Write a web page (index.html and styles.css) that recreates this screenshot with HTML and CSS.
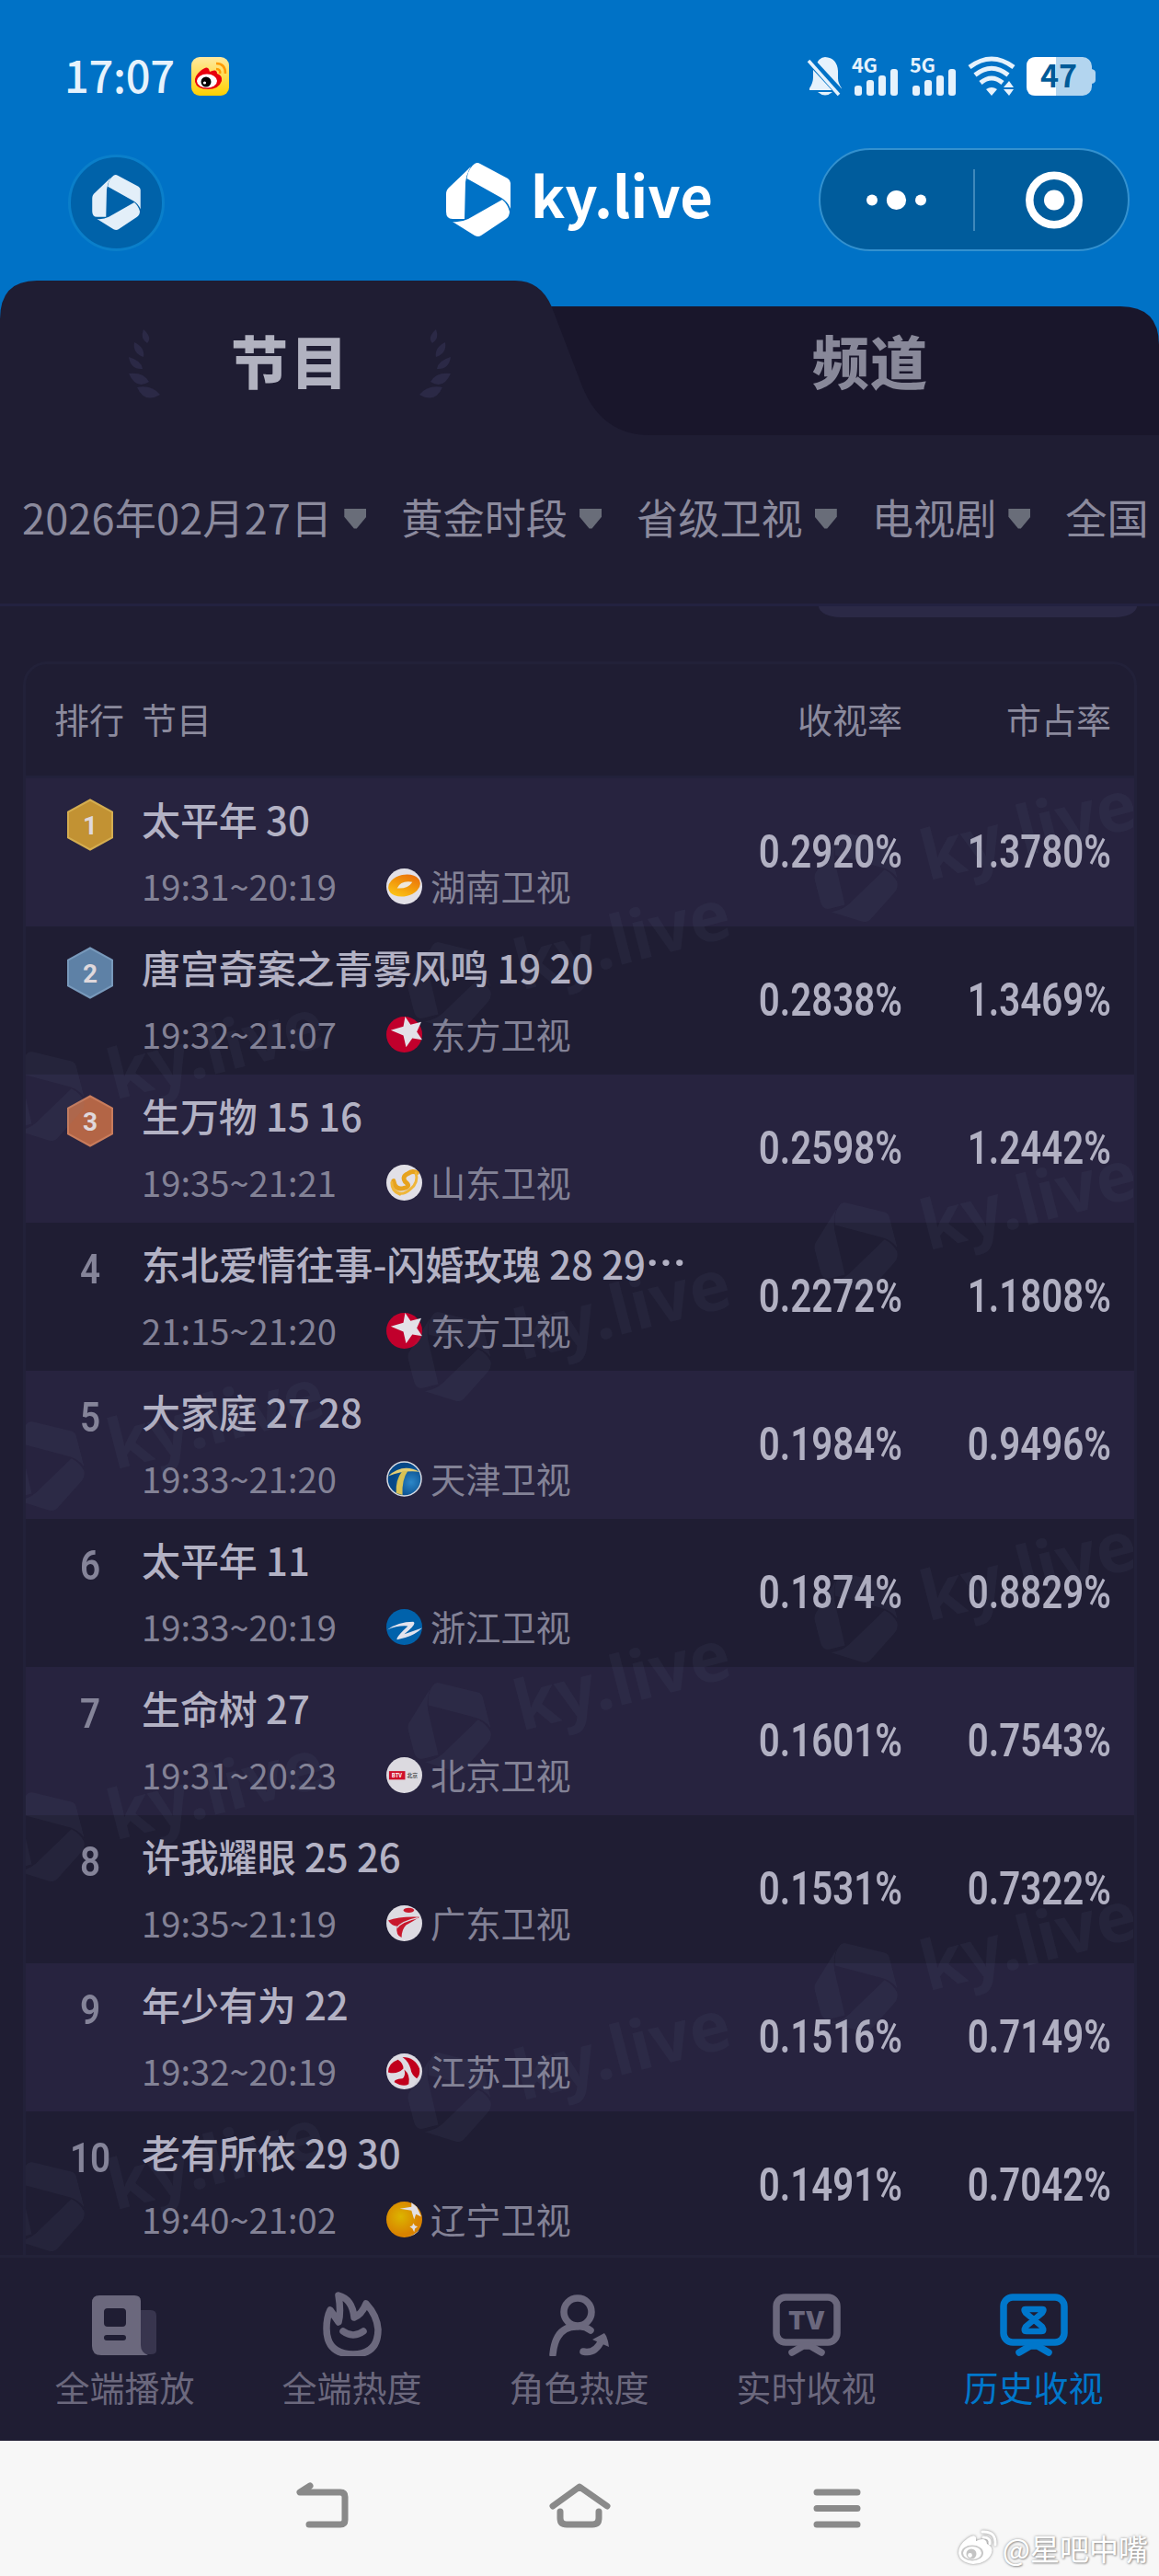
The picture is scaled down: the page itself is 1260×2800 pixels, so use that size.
FILE: index.html
```html
<!DOCTYPE html>
<html lang="zh-CN">
<head>
<meta charset="utf-8">
<title>ky.live</title>
<link rel="stylesheet" href="styles.css">
</head>
<body>
<svg class="defs" width="0" height="0" aria-hidden="true">
  <symbol id="logo" viewBox="0 0 70 80">
    <path d="M0 34Q0 29 4 26L27 4Q22 12 21 21L20 61H7Q0 61 0 53Z"/>
    <path d="M22.5 17Q24 6 31 1Q34-1 37 1L67 17Q70 19 70 22V50Q67 42 60 38Z"/>
    <path d="M61 40Q67 45 69 53Q69 58 65 61L38 79Q35 81 31 79L7 64Q16 65 24 61Z"/>
  </symbol>
  <symbol id="mark" viewBox="0 0 320 100" overflow="visible">
    <use href="#logo" x="0" y="0" width="88" height="100"/>
    <text x="119" y="74" class="mark-text">ky.live</text>
  </symbol>
  <symbol id="star" viewBox="0 0 40 40">
    <circle cx="20" cy="20" r="20" fill="#c1002c"/>
    <path d="M21 0L27 9L39 6L34 17L40 26L29 24L22 34L19 21L5 15L19 11Z" fill="#e3e1e8"/>
  </symbol>
</svg>

<header class="top">
  <div class="status">
    <span class="clock">17:07</span>
    <svg class="app" viewBox="0 0 41 42"><defs><linearGradient id="g" x2="0" y2="1"><stop stop-color="#ffe9a0"/><stop offset="1" stop-color="#ffd000"/></linearGradient></defs><rect width="41" height="42" rx="9" fill="url(#g)"/><path d="M4 27Q3 21 10 15Q17 9 19 13L20 16Q28 12 28 18Q34 20 33 26Q30 35 18 35Q6 35 4 27Z" fill="#e8000d"/><ellipse cx="17" cy="26" rx="11" ry="7.5" fill="#fff"/><circle cx="16" cy="27" r="5.5"/><circle cx="14.500" cy="28" r="1.600" fill="#fff"/><path d="M27 7Q37 7 37 18M27 13Q32 13 31 18" fill="none" stroke="#ff9a00" stroke-width="2.500"/></svg>
    <svg class="signals" viewBox="0 0 312 42" fill="#e6f2fc">
      <path d="M7 11Q11 0 18 0Q31 1 32 15V23Q32 28 36 34V36H1V34Q5 28 5 22V11Z"/><path d="M10 38H26Q18 45 10 38Z"/><path d="M1 3L36 41" stroke="#0072c6" stroke-width="9"/><path d="M0 4L33 41" stroke="#e6f2fc" stroke-width="3.500"/>
      <text x="47" y="16.500" class="net">4G</text><text x="110" y="16.500" class="net">5G</text>
      <g id="bars"><rect x="50" y="31" width="8" height="11" rx="3"/><rect x="63" y="25" width="8" height="17" rx="3"/><rect x="76" y="20" width="8" height="22" rx="3"/><rect x="89" y="13" width="8" height="29" rx="3"/></g>
      <use href="#bars" x="63"/>
      <g fill="none" stroke="#e6f2fc" stroke-width="5"><path d="M175 11Q199-7 223 11M181 19.500Q199 5 217 19.500M187 28Q199 18 211 28"/></g>
      <path d="M193 35Q199 31 205 35L199 42ZM212 33L218 26L223 33ZM212 35H223L218 42Z"/>
      <rect x="237" width="71" height="42" rx="10" fill="#b3d5ef"/><path d="M247 0H269V42H247Q237 42 237 32V10Q237 0 247 0Z" fill="#fff"/><path d="M308 13Q312 14 312 17V25Q312 28 308 29Z" fill="#b3d5ef"/>
      <text x="252" y="33" class="batt">47</text>
    </svg>
  </div>
  <div class="brandbar">
    <span class="avatar"><svg width="53" height="60"><use href="#logo"/></svg></span>
    <span class="brand"><svg width="70" height="80"><use href="#logo"/></svg><b>ky.live</b></span>
    <svg class="capsule" viewBox="0 0 338 112"><rect x="1" y="1" width="336" height="110" rx="55" fill="#005c9c" stroke="#3391cf" stroke-width="2"/><path d="M169 23V90" stroke="#3f88bb" stroke-width="2"/><g fill="#fff"><circle cx="58" cy="56.500" r="6"/><circle cx="84.500" cy="56.500" r="10.600"/><circle cx="111" cy="56.500" r="6"/><circle cx="256" cy="56.500" r="11"/></g><circle cx="256" cy="56.500" r="26.700" fill="none" stroke="#fff" stroke-width="8.500"/></svg>
  </div>
</header>

<nav class="tabs">
  <svg class="tabs-bg" viewBox="0 0 1260 170">
    <path d="M560 28H1218Q1260 28 1260 70V168H560Z" fill="#19162b"/>
    <path d="M0 170V42Q0 0 40 0H560Q588 0 600 29L633 115Q654 168 707 168H1260V170Z" fill="#1f1d33"/>
    <g id="laurel" fill="#2b2946"><path d="M156 53Q166 62 160 68Q152 63 156 53Z"/><path d="M146 67Q158 73 156 83Q144 79 146 67Z"/><path d="M140 83Q154 87 155 96Q142 97 140 83Z"/><path d="M140 101Q156 99 162 110Q148 119 140 101Z"/><path d="M149 116Q165 113 174 124Q157 134 149 116Z"/></g>
    <use href="#laurel" transform="matrix(-1 0 0 1 630 0)"/>
  </svg>
  <span class="tab on">节目</span><span class="tab">频道</span>
</nav>

<div class="filters">
  <span class="filter date">2026年02月27日</span><span class="filter">黄金时段</span><span class="filter">省级卫视</span><span class="filter">电视剧</span><span class="filter">全国</span>
</div>

<main class="content">
  <div class="pill"></div>
  <section class="table">
    <div class="head"><span>排行</span><span>节目</span><span class="num">收视率</span><span class="num">市占率</span></div>

    <div class="row"><svg class="badge" viewBox="0 0 50 56"><path d="M25 1L49 14V42L25 55L1 42V14Z" fill="#c29233" stroke="#d4ad50" stroke-width="2"/><text x="25" y="38">1</text></svg>
      <div class="info"><div class="title">太平年 30</div><div class="meta"><span class="time">19:31~20:19</span><svg class="ch" viewBox="0 0 40 40"><defs><linearGradient id="mg" x1="0" y1="1" x2="1" y2="0"><stop stop-color="#ffd21c"/><stop offset=".5" stop-color="#f29a0c"/><stop offset="1" stop-color="#e8620b"/></linearGradient></defs><circle cx="20" cy="20" r="20" fill="#e2e0e7"/><ellipse cx="20" cy="19" rx="18" ry="12" fill="url(#mg)" transform="rotate(-12 20 19)"/><path d="M12 22Q16 13 29 15Q24 23 12 22Z" fill="#eee8dc"/></svg>湖南卫视</div></div><b class="rate">0.2920%</b><b class="rate">1.3780%</b></div>

    <div class="row"><svg class="badge" viewBox="0 0 50 56"><path d="M25 1L49 14V42L25 55L1 42V14Z" fill="#5e81a6" stroke="#7899bb" stroke-width="2"/><text x="25" y="38">2</text></svg>
      <div class="info"><div class="title">唐宫奇案之青雾风鸣 19 20</div><div class="meta"><span class="time">19:32~21:07</span><svg class="ch"><use href="#star"/></svg>东方卫视</div></div><b class="rate">0.2838%</b><b class="rate">1.3469%</b></div>

    <div class="row"><svg class="badge" viewBox="0 0 50 56"><path d="M25 1L49 14V42L25 55L1 42V14Z" fill="#b36546" stroke="#c87c5c" stroke-width="2"/><text x="25" y="38">3</text></svg>
      <div class="info"><div class="title">生万物 15 16</div><div class="meta"><span class="time">19:35~21:21</span><svg class="ch" viewBox="0 0 40 40"><circle cx="20" cy="20" r="20" fill="#e2e0e7"/><g fill="none" stroke-linecap="round"><path d="M8 18Q10 29 20 26Q28 24 21 19Q17 13 24 10Q29 6 34 9" stroke="#e7a31e" stroke-width="5"/><path d="M8 27Q16 37 27 27Q36 20 33 9M6 20Q6 30 15 33" stroke="#efb63a" stroke-width="3"/></g></svg>山东卫视</div></div><b class="rate">0.2598%</b><b class="rate">1.2442%</b></div>

    <div class="row"><span class="rank">4</span><div class="info"><div class="title">东北爱情往事-闪婚玫瑰 28 29<span class="more">···</span></div><div class="meta"><span class="time">21:15~21:20</span><svg class="ch"><use href="#star"/></svg>东方卫视</div></div><b class="rate">0.2272%</b><b class="rate">1.1808%</b></div>

    <div class="row"><span class="rank">5</span><div class="info"><div class="title">大家庭 27 28</div><div class="meta"><span class="time">19:33~21:20</span><svg class="ch" viewBox="0 0 40 40"><defs><radialGradient id="tj" cx=".7" cy=".6"><stop stop-color="#2c87c8"/><stop offset="1" stop-color="#064887"/></radialGradient></defs><circle cx="20" cy="20" r="19" fill="url(#tj)" stroke="#d9dce4" stroke-width="1.500"/><path d="M2 17Q18 2 37 12Q19 10 2 17Z" fill="#e3cd73"/><path d="M18 11H24Q17 21 18 38L11 36Q10 21 18 11Z" fill="#d8c254"/></svg>天津卫视</div></div><b class="rate">0.1984%</b><b class="rate">0.9496%</b></div>

    <div class="row"><span class="rank">6</span><div class="info"><div class="title">太平年 11</div><div class="meta"><span class="time">19:33~20:19</span><svg class="ch" viewBox="0 0 40 40"><circle cx="20" cy="20" r="20" fill="#0062ab"/><path d="M1 23Q13 14 30 14Q35 16 20 28L40 21Q30 31 12 34Q10 32 24 19Q13 18 1 23Z" fill="#e2e3ed"/></svg>浙江卫视</div></div><b class="rate">0.1874%</b><b class="rate">0.8829%</b></div>

    <div class="row"><span class="rank">7</span><div class="info"><div class="title">生命树 27</div><div class="meta"><span class="time">19:31~20:23</span><svg class="ch" viewBox="0 0 40 40"><circle cx="20" cy="20" r="20" fill="#dcdae0"/><rect x="3" y="15.500" width="18" height="9.500" fill="#cf102a"/><text x="6" y="22.500" class="tiny w">BTV</text><text x="23" y="23" class="tiny">北京</text></svg>北京卫视</div></div><b class="rate">0.1601%</b><b class="rate">0.7543%</b></div>

    <div class="row"><span class="rank">8</span><div class="info"><div class="title">许我耀眼 25 26</div><div class="meta"><span class="time">19:35~21:19</span><svg class="ch" viewBox="0 0 40 40"><circle cx="20" cy="20" r="20" fill="#dddbe2"/><ellipse cx="25" cy="5.500" rx="6" ry="2.800" fill="#c8182c"/><path d="M2 17Q15 12 37 13Q31 17 22 22Q17 27 17 36Q10 33 12 23Q7 24 2 17Z" fill="#c8182c"/><path d="M12 25Q17 18 35 14" stroke="#dddbe2" stroke-width="1.500" fill="none"/></svg>广东卫视</div></div><b class="rate">0.1531%</b><b class="rate">0.7322%</b></div>

    <div class="row"><span class="rank">9</span><div class="info"><div class="title">年少有为 22</div><div class="meta"><span class="time">19:32~20:19</span><svg class="ch" viewBox="0 0 40 40"><circle cx="20" cy="20" r="20" fill="#dddbe2"/><path d="M13 7Q2 11 2 21Q12 24 19 17Q19 11 13 7ZM18 4Q32 4 37 17Q38 24 34 28Q28 24 27 17Q25 9 18 4ZM20 18Q27 24 25 34Q19 38 9 32Q8 29 18 28Q22 25 20 18Z" fill="#c1001c"/></svg>江苏卫视</div></div><b class="rate">0.1516%</b><b class="rate">0.7149%</b></div>

    <div class="row"><span class="rank">10</span><div class="info"><div class="title">老有所依 29 30</div><div class="meta"><span class="time">19:40~21:02</span><svg class="ch" viewBox="0 0 40 40"><defs><radialGradient id="ln" cx=".4" cy=".42"><stop stop-color="#dcb500"/><stop offset="1" stop-color="#d98300"/></radialGradient></defs><circle cx="20" cy="20" r="20" fill="url(#ln)"/><path d="M15 8L28 6V1L34 6L39 17L33 14L31 20L28 10ZM30 24L32 27L35 28L32 30L31 34L29 30L26 28L29 27ZM21 39Q32 38 37 31Q34 38 21 39Z" fill="#e3e0e4"/></svg>辽宁卫视</div></div><b class="rate">0.1491%</b><b class="rate">0.7042%</b></div>

    <svg class="marks" viewBox="0 0 1204 1605" aria-hidden="true">
      <g id="band">
        <use href="#mark" width="320" height="100" transform="translate(847 70) rotate(-14.500)"/>
        <use href="#mark" width="320" height="100" transform="translate(405 189) rotate(-14.500)"/>
        <use href="#mark" width="320" height="100" transform="translate(-37 308) rotate(-14.500)"/>
      </g>
      <use href="#band" y="402"/><use href="#band" y="805"/><use href="#band" y="1207"/>
    </svg>
  </section>
</main>

<nav class="bottom">
  <a class="item"><svg viewBox="-2 0 80 72"><path d="M54 22H66Q72 22 72 28V66Q72 70 66 70H50Z" fill="#38354e"/><path d="M10 6H48Q55 6 55 12V60Q55 68 63 71H12Q2 71 2 61V14Q2 6 10 6ZM19 20Q15 20 15 24V36Q15 40 19 40H35Q39 40 39 36V24Q39 20 35 20ZM18 49Q15 49 15 52T18 55H36Q39 55 39 52T36 49Z" fill="#6b687d" fill-rule="evenodd"/></svg>全端播放</a>
  <a class="item"><svg viewBox="-1 0 80 72"><path d="M24 6Q39 10 41 30Q49 27 54 15Q66 28 67 43Q67 70 40 70Q11 70 11 42Q11 30 15 22Q20 29 24 35Q27 24 24 6ZM29 45Q40 53 51 45" class="ln"/></svg>全端热度</a>
  <a class="item"><svg viewBox="0 0 80 72"><circle cx="38" cy="24" r="15" class="ln"/><path d="M11 70Q14 39 38 40Q45 39 52 44M44 67Q57 70 64 55" class="ln"/><path d="M54 54L67 47Q71 52 72 62Z" fill="#6b687d"/></svg>角色热度</a>
  <a class="item"><svg viewBox="0 0 80 72"><rect x="7" y="8" width="66" height="49" rx="10" class="ln"/><path d="M24 68L36 61H44L56 68" class="ln"/><text x="40" y="43" class="tv">TV</text></svg>实时收视</a>
  <a class="item on"><svg viewBox="0 0 80 72"><rect x="7" y="8" width="66" height="49" rx="10" class="ln"/><path d="M24 68L36 61H44L56 68" class="ln"/><path d="M31 21H49Q52 21 49 25L31 40Q28 45 32 45H48Q52 45 49 40L31 25Q28 21 31 21Z" class="ln thin"/></svg>历史收视</a>
</nav>

<footer class="system">
  <svg class="keys" viewBox="0 0 614 51" fill="none" stroke="#8a8a8a" stroke-width="7" stroke-linecap="round" stroke-linejoin="round"><path d="M15 4L4 11H48Q53 11 53 16V41Q53 46 48 46H14M279 26L308 5L338 26M287 32V39Q287 46 294 46H322Q329 46 329 39V32M566 11H610M566 28.500H610M566 46H610"/></svg>
  <div class="credit"><svg viewBox="0 0 44 40"><path d="M1 26Q1 17 11 10Q18 5 20 9V13Q31 8 32 16Q39 19 37 26Q33 37 17 38Q2 36 1 26Z" fill="#fff"/><ellipse cx="16" cy="26" rx="12" ry="8.500" fill="#c8c8c8"/><ellipse cx="16" cy="26" rx="10" ry="7" fill="#fff"/><circle cx="15" cy="27" r="5.500" fill="#c4c4c4"/><circle cx="13.500" cy="28.500" r="2.400" fill="#fff"/><path d="M27 3Q42 2 41 17M28 9Q36 9 35 16" fill="none" stroke="#fff" stroke-width="3" stroke-linecap="round"/></svg><span>@星吧中嘴</span></div>
</footer>
</body>
</html>
```
FILE: styles.css
```css
* { box-sizing: border-box; }
body {
  margin: 0;
  width: 1260px;
  height: 2800px;
  overflow: hidden;
  display: flex;
  flex-direction: column;
  background: #1f1d33;
  color: #8b8a9d;
  font-family: "Noto Sans CJK SC", "Noto Sans", sans-serif;
}
svg { display: block; flex: none; }
.defs { position: absolute; }

/* header */
.top { height: 305px; flex: none; background: #0072c6; color: #fff; padding-top: 62px; }
.status { height: 42px; display: flex; align-items: center; padding-left: 70px; }
.clock { width: 138px; font-size: 47px; font-weight: 500; line-height: 70px; margin-top: -4px; letter-spacing: -.3px; color: #e6f2fc; }
.app { width: 41px; height: 42px; }
.signals { width: 312px; height: 42px; margin-left: 630px; overflow: visible; }
.net { font-size: 21.5px; font-weight: 700; letter-spacing: -.3px; }
.batt { font-size: 34px; font-weight: 700; fill: #005a98; }
.brandbar { height: 112px; margin-top: 57px; padding: 0 32px 0 75px; display: flex; align-items: center; }
.avatar {
  width: 105px; height: 105px; border-radius: 50%;
  display: flex; align-items: center; justify-content: center;
  margin: 6px 1px 0 -1px;
  background: #0062a9; border: 3px solid #0a7fca; fill: #e3eff9;
}
.brand { display: flex; align-items: center; margin-left: 305px; fill: #fff; width: 405px; }
.brand svg { margin-top: -1px; }
.brand b { margin-left: 22px; margin-top: -12px; font-size: 61.5px; line-height: 80px; letter-spacing: .1px; }
.capsule { width: 338px; height: 112px; }

/* tabs */
.tabs { position: relative; height: 170px; flex: none; display: flex; background: #0072c6; }
.tabs-bg { position: absolute; inset: 0; width: 1260px; height: 170px; }
.tab {
  position: relative; width: 630px; padding: 41px 0 0 2px; text-align: center;
  font-size: 62px; line-height: 90px; font-weight: 900; color: #888899; letter-spacing: 1px;
}
.tab.on { color: #b1b2c0; letter-spacing: 3px; }

/* filters */
.filters {
  height: 184px; flex: none; display: flex; align-items: flex-start;
  padding: 54px 0 0 24px; gap: 38px; overflow: hidden;
  border-bottom: 3px solid #232240; white-space: nowrap;
}
.filter { display: flex; align-items: center; gap: 13px; flex: none; font-size: 45.2px; line-height: 66px; }
.filter.date { letter-spacing: .1px; }
.filter::after {
  content: ""; width: 24px; height: 22px; margin-top: 3px; background: #696d79;
  clip-path: polygon(0 0, 100% 0, 100% 42%, 56% 100%, 44% 100%, 0 42%);
}

/* ranking table */
.content { height: 1792px; flex: none; overflow: hidden; padding: 0 24px 0 25px; }
.pill { width: 346px; height: 12px; margin-left: auto; background: #2b2946; border-radius: 0 0 24px 24px / 0 0 12px 12px; }
.table { position: relative; margin-top: 48px; border: 3px solid #222139; border-radius: 26px; height: 1800px; overflow: hidden; }
.head {
  height: 124px; display: grid; grid-template-columns: 95px 1fr 227px 227px;
  align-items: center; padding: 0 25px 4px 31px; font-size: 38px; border-bottom: 3px solid #22213b;
}
.num { text-align: right; }
.row { height: 161px; display: grid; grid-template-columns: 126px 1fr 227px 227px; padding-right: 25px; }
.row:nth-child(even) { background: #27233f; }
.badge { width: 50px; height: 57px; margin: 22px 0 0 45px; }
.badge text { font: 700 28px Roboto, sans-serif; fill: #dfd8dc; text-anchor: middle; }
.rank {
  width: 80px; margin: 21px 0 0 30px; text-align: center;
  font: 600 45px/60px Roboto, sans-serif; transform: scaleX(.86); color: #858499;
}
.info { white-space: nowrap; min-width: 0; }
.title { height: 92px; padding-top: 14px; font-size: 42px; line-height: 60px; font-weight: 500; color: #b3b2c4; letter-spacing: -.1px; }
.more { font-family: Roboto, sans-serif; font-size: 52px; letter-spacing: 0; line-height: 40px; }
.meta { display: flex; align-items: center; font-size: 38.2px; line-height: 50px; color: #838296; }
.time { width: 266px; }
.ch { width: 39px; height: 39px; margin-right: 9px; }
.tiny { font-size: 6px; font-weight: 700; fill: #555; }
.tiny.w { fill: #fff; }
.rate {
  justify-self: end; white-space: nowrap; padding-top: 50px;
  font: 600 50px/60px Roboto, sans-serif; color: #b1b0c2;
  transform: scaleX(.805); transform-origin: right;
}
.marks { position: absolute; left: 0; top: 124px; width: 1204px; height: 1605px; fill: rgba(120, 130, 150, .08); pointer-events: none; }
.mark-text { font: 700 75px "Noto Sans", "Open Sans", sans-serif; }

/* app navigation */
.bottom {
  height: 202px; flex: none; display: grid; grid-template-columns: repeat(5, 247px);
  padding: 35px 12.5px 0 12px; border-top: 3px solid #232239; font-size: 38px; line-height: 50px;
}
.item { display: flex; flex-direction: column; align-items: center; gap: 8px; color: #6b687d; }
.item svg { width: 80px; height: 72px; }
.item.on { color: #0077cb; }
.ln { fill: none; stroke: currentColor; stroke-width: 7.5; stroke-linecap: round; stroke-linejoin: round; }
.thin { stroke-width: 6.5; }
.tv { font: 900 27px Inter, sans-serif; fill: currentColor; text-anchor: middle; }

/* device keys */
.system { position: relative; height: 147px; flex: none; background: #f7f7f7; padding: 45px 0 0 322px; }
.keys { width: 614px; height: 51px; }
.credit {
  position: absolute; right: 12px; bottom: 6px; display: flex; align-items: center; gap: 5px;
  color: #fff; font-size: 32px; line-height: 50px; text-shadow: 0 0 3px #999, 1px 1px 2px #999;
}
.credit svg { width: 44px; height: 40px; filter: drop-shadow(0 0 1.5px #888); }
```
